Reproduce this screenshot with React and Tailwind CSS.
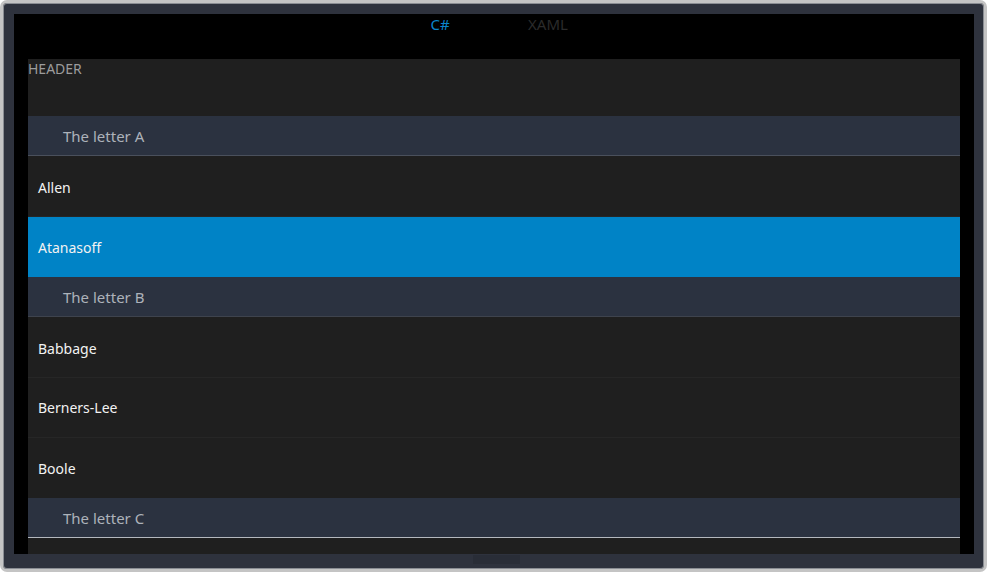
const groups = [
  { title: "The letter A", items: ["Allen", "Atanasoff"], line: "border-[#4a505c]" },
  { title: "The letter B", items: ["Babbage", "Berners-Lee", "Boole"], line: "border-[#3e434d]" },
  { title: "The letter C", items: [""], line: "border-[#b4b8be]" },
];

const selected = "Atanasoff";

function Item({ name, first, last }) {
  const active = name === selected;
  return (
    <div
      className={`flex shrink-0 items-center pl-[10px] text-[14px] text-[#f2f2f2] ${
        first ? "h-[61px] pt-[2px]" : "h-[60px]"
      } ${active ? "bg-[#0083c6]" : "bg-[#1f1f1f]"} ${last ? "" : "border-b border-[#262626]"}`}
    >
      {name}
    </div>
  );
}

function Group({ title, items, line }) {
  return (
    <div className="flex flex-col">
      <div
        className={`flex h-[40px] shrink-0 items-center border-b pl-[35px] pt-[1px] text-[15px] text-[#adb2ba] bg-[#2b3240] ${line}`}
      >
        {title}
      </div>
      {items.map((n, i) => (
        <Item key={i} name={n} first={i === 0} last={i === items.length - 1} />
      ))}
    </div>
  );
}

export default function App() {
  return (
    <div
      className="h-[572px] w-[987px] overflow-hidden bg-white"
      style={{ fontFamily: '"Noto Sans", "Open Sans", sans-serif' }}
    >
      <div className="flex h-full w-full flex-col rounded-[7px] border-[3px] border-[#c4c4c4] bg-[#2e323d] pb-[15px] pl-[11px] pr-[10px] pt-[11px] shadow-[inset_0_0_0_1px_#8a8d93]">
        <div className="flex min-h-0 flex-1 flex-col bg-black">
          <div className="flex h-[45px] shrink-0 justify-center">
            <div className="w-[108px] text-center text-[15px] leading-[20px] text-[#0a86cc]">C#</div>
            <div className="w-[108px] text-center text-[15px] leading-[20px] text-[#2b2b2b]">XAML</div>
          </div>
          <div className="mx-[14px] flex min-h-0 flex-1 flex-col overflow-hidden bg-[#1f1f1f]">
            <div className="h-[57px] shrink-0 pt-[1px] text-[14px] leading-[18px] text-[#9c9c9c]">
              HEADER
            </div>
            {groups.map((g) => (
              <Group key={g.title} {...g} />
            ))}
          </div>
        </div>
        <div className="relative h-0">
          <div className="absolute left-[459px] top-[1px] h-[9px] w-[47px] bg-[#292d37]" />
        </div>
      </div>
    </div>
  );
}
